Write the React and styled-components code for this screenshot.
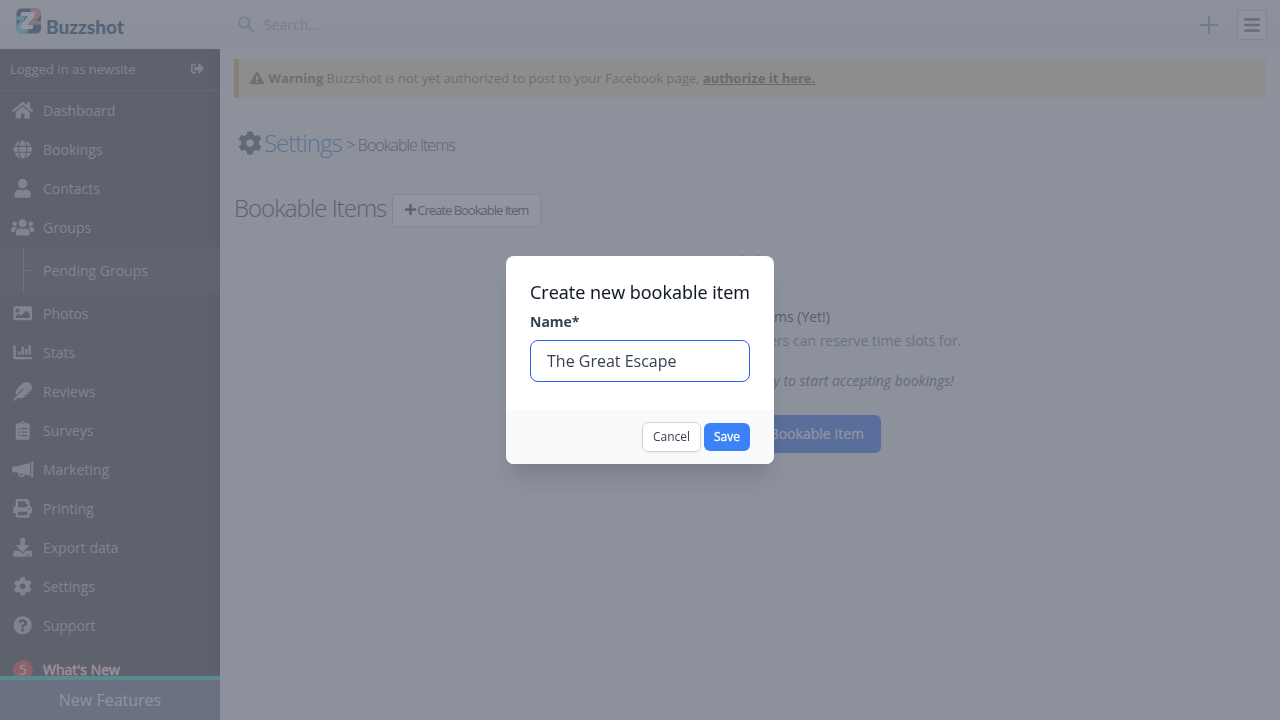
import React from 'react';
import styled, { createGlobalStyle } from 'styled-components';
import {
  FaBars,
  FaChartBar,
  FaClipboardList,
  FaCog,
  FaDownload,
  FaExclamationTriangle,
  FaFeather,
  FaGlobe,
  FaHome,
  FaImage,
  FaPlus,
  FaPrint,
  FaQuestionCircle,
  FaSignOutAlt,
  FaUser,
  FaUsers,
} from 'react-icons/fa';

const MegaphoneIcon = () => (
  <svg viewBox="0 0 576 512" fill="currentColor">
    <rect x="522" y="32" width="54" height="448" rx="18" />
    <path d="M492 76L92 186C80 166 0 160 0 204v104c0 44 80 38 92 18l400 110z" />
    <path d="M192 350v22a72 72 0 0 0 140 24" fill="none" stroke="currentColor" strokeWidth="50" />
  </svg>
);

const SearchIcon = () => (
  <svg width="18" height="18" viewBox="0 0 18 18" fill="none" stroke="currentColor">
    <circle cx="6.2" cy="6.6" r="5.2" strokeWidth="1.9" />
    <path d="M10.2 10.6l5.6 5.6" strokeWidth="2.4" />
  </svg>
);

const CalendarIcon = () => (
  <svg
    width="48"
    height="48"
    viewBox="0 0 24 24"
    fill="none"
    stroke="currentColor"
    strokeWidth="2"
    strokeLinecap="round"
    strokeLinejoin="round"
  >
    <path d="M8 7V3m8 4V3m-9 8h10M5 21h14a2 2 0 002-2V7a2 2 0 00-2-2H5a2 2 0 00-2 2v12a2 2 0 002 2z" />
  </svg>
);

const LogoMark = () => (
  <svg width="26" height="26" viewBox="0 0 26 26">
    <rect x="0.5" y="0.5" width="24.5" height="25" rx="4.5" fill="#174263" />
    <path d="M13.5 0.5h7a4.5 4.5 0 0 1 4.5 4.5v2L19.5 13H25v3.5H13L17 8z" fill="#f47c72" />
    <path d="M0.5 8.5H9L6 19h7l-2 6.5H5A4.5 4.5 0 0 1 .5 21v-3L5 12H.5z" fill="#70c9c8" />
    <path d="M5.5 4h14l-1 4.3-6.6 8.400h5.600l-1 4.300H4.200l1-4.200 6.600-8.500H4.500z" fill="#fff" />
  </svg>
);

const mainNav = [
  { label: 'Dashboard', icon: <FaHome /> },
  { label: 'Bookings', icon: <FaGlobe /> },
  { label: 'Contacts', icon: <FaUser /> },
  { label: 'Groups', icon: <FaUsers />, child: 'Pending Groups' },
  { label: 'Photos', icon: <FaImage /> },
  { label: 'Stats', icon: <FaChartBar /> },
  { label: 'Reviews', icon: <FaFeather /> },
  { label: 'Surveys', icon: <FaClipboardList /> },
  { label: 'Marketing', icon: <MegaphoneIcon /> },
  { label: 'Printing', icon: <FaPrint /> },
  { label: 'Export data', icon: <FaDownload /> },
  { label: 'Settings', icon: <FaCog /> },
  { label: 'Support', icon: <FaQuestionCircle /> },
];

const Header = () => (
  <HeaderWrapper>
    <Logo>
      <LogoMark />
      <span>Buzzshot</span>
    </Logo>
    <SearchBox>
      <SearchIcon />
      <span>Search...</span>
    </SearchBox>
    <AddButton aria-label="Add">
      <svg width="18" height="18" viewBox="0 0 18 18" stroke="currentColor" strokeWidth="2">
        <path d="M9 0v18M0 9h18" />
      </svg>
    </AddButton>
    <MenuButton aria-label="Menu">
      <FaBars />
    </MenuButton>
  </HeaderWrapper>
);

const Sidebar = () => (
  <SidebarWrapper>
    <UserRow>
      <span>Logged in as newsite</span>
      <FaSignOutAlt />
    </UserRow>
    <nav>
      {mainNav.map(({ label, icon, child }) => (
        <React.Fragment key={label}>
          <NavItem>
            <NavIcon>{icon}</NavIcon>
            {label}
          </NavItem>
          {child && <SubItem>{child}</SubItem>}
        </React.Fragment>
      ))}
      <NewsItem>
        <Badge>5</Badge>
        What&apos;s New
      </NewsItem>
    </nav>
    <NewFeatures>New Features</NewFeatures>
  </SidebarWrapper>
);

const EmptyState = () => (
  <EmptyWrapper>
    <CalendarIcon />
    <h3>No Bookable Items (Yet!)</h3>
    <p>Bookable items are options customers can reserve time slots for.</p>
    <em>Create one now and you will be ready to start accepting bookings!</em>
    <PrimaryButton>
      <FaPlus />
      Create your first Bookable Item
    </PrimaryButton>
  </EmptyWrapper>
);

const CreateItemModal = () => (
  <Overlay>
    <Dialog role="dialog">
      <DialogBody>
        <h2>Create new bookable item</h2>
        <label htmlFor="item-name">Name*</label>
        <input id="item-name" defaultValue="The Great Escape" />
      </DialogBody>
      <DialogFooter>
        <DialogButton>Cancel</DialogButton>
        <DialogButton $primary>Save</DialogButton>
      </DialogFooter>
    </Dialog>
  </Overlay>
);

const App = () => (
  <>
    <GlobalStyle />
    <Page>
      <Header />
      <Columns>
        <Sidebar />
        <Content>
          <Alert>
            <FaExclamationTriangle />
            <span>
              <strong>Warning</strong> Buzzshot is not yet authorized to post to your Facebook page,{' '}
              <a>authorize it here.</a>
            </span>
          </Alert>
          <Breadcrumb>
            <FaCog />
            <a>Settings</a>
            <span>&gt; Bookable Items</span>
          </Breadcrumb>
          <TitleRow>
            <h1>Bookable Items</h1>
            <CreateButton>
              <FaPlus />
              Create Bookable Item
            </CreateButton>
          </TitleRow>
          <EmptyState />
        </Content>
      </Columns>
    </Page>
    <CreateItemModal />
  </>
);

const GlobalStyle = createGlobalStyle`
  * {
    box-sizing: border-box;
  }

  body {
    margin: 0;
    overflow: hidden;
    font-family: 'Open Sans', 'Noto Sans', sans-serif;
    font-size: 13px;
    color: #333;
  }

  h1, h2, h3, p {
    margin: 0;
  }

  button, input {
    font-family: inherit;
  }
`;

const Page = styled.div`
  display: flex;
  flex-direction: column;
  height: 100vh;
  background: #eeeeef;
`;

const HeaderWrapper = styled.header`
  display: flex;
  align-items: center;
  flex: none;
  height: 49px;
  padding-right: 13px;
  background: linear-gradient(to bottom, #f3f3f3, #e2e2e2);
`;

const Logo = styled.div`
  display: flex;
  align-items: flex-start;
  gap: 4px;
  width: 238px;
  height: 49px;
  padding: 8px 0 0 16px;

  & span {
    margin-top: 7px;
    font-family: Lato, sans-serif;
    font-size: 19px;
    font-weight: 900;
    line-height: 24px;
    color: #123d60;
  }
`;

const SearchBox = styled.div`
  display: flex;
  align-items: center;
  gap: 8px;
  flex: 1;
  font-size: 14px;
  color: #9ca3af;
`;

const AddButton = styled.button`
  display: flex;
  margin-right: 19px;
  padding: 0;
  border: 0;
  background: none;
  color: #8b95a5;
`;

const MenuButton = styled.button`
  display: flex;
  align-items: center;
  justify-content: center;
  width: 30px;
  height: 30px;
  padding: 0;
  border: 1px solid #bfbfbf;
  border-radius: 2px;
  background: #f3f3f3;
  font-size: 18px;
  color: #6d6a69;
`;

const Columns = styled.div`
  display: flex;
  flex: 1;
  min-height: 0;
`;

const SidebarWrapper = styled.aside`
  display: flex;
  flex-direction: column;
  flex: none;
  width: 220px;
  background: linear-gradient(to left, #2c2927, #3a3633 12px);
  color: #c0bbb7;

  & nav {
    flex: 1;
    min-height: 0;
    overflow: hidden;
  }
`;

const UserRow = styled.div`
  display: flex;
  align-items: center;
  justify-content: space-between;
  flex: none;
  height: 42px;
  padding: 0 16px 2px 10px;
  border-bottom: 1px solid #525151;
  font-size: 13px;

  & svg {
    font-size: 13px;
  }
`;

const NavItem = styled.a`
  display: flex;
  align-items: center;
  height: 39px;
  padding-left: 11px;
  font-size: 14px;
`;

const NavIcon = styled.span`
  display: flex;
  justify-content: center;
  width: 23px;
  margin-right: 9px;
  font-size: 18.7px;

  & svg {
    flex: none;
    width: 1.25em;
    height: 1em;
  }
`;

const SubItem = styled.a`
  display: flex;
  align-items: center;
  height: 47px;
  padding-left: 23px;
  background: rgba(69, 69, 69, 0.6);
  font-size: 14px;

  &::before {
    content: '';
    align-self: stretch;
    width: 8px;
    margin-right: 11px;
    border-left: 1px solid #7a7a7a;
    background: linear-gradient(#7a7a7a, #7a7a7a) 0 23px / 8px 1px no-repeat;
  }
`;

const NewsItem = styled(NavItem)`
  margin-top: 5px;
  padding-left: 13px;
  color: #fff;
  text-shadow: 0 0 5px #f00;
  -webkit-text-stroke: 0.4px #fff;
`;

const Badge = styled.span`
  display: flex;
  align-items: center;
  justify-content: center;
  width: 20px;
  height: 20px;
  margin-right: 10px;
  border-radius: 50%;
  background: #ed3a2d;
  text-shadow: none;
  -webkit-text-stroke: 0;
`;

const NewFeatures = styled.div`
  flex: none;
  height: 44px;
  border-top: 4px solid #33d6bd;
  background: #6b7280;
  font-size: 16px;
  line-height: 40px;
  text-align: center;
  color: #f3f4f6;
`;

const Content = styled.main`
  flex: 1;
  padding: 10px 14px;
`;

const Alert = styled.div`
  display: flex;
  align-items: center;
  gap: 4.5px;
  height: 39px;
  padding: 0 0 2px 11px;
  border-left: 5px solid #dfa54c;
  background: #efe1b3;
  color: #826430;

  & svg {
    font-size: 14px;
  }

  & a {
    font-weight: 700;
    text-decoration: underline;
    color: #7a4a2c;
  }
`;

const Breadcrumb = styled.div`
  display: flex;
  align-items: baseline;
  margin-top: 25px;
  padding-left: 4px;
  height: 40px;
  line-height: 40px;
  letter-spacing: -1px;
  font-weight: 300;

  & svg {
    align-self: center;
    margin-right: 2px;
    font-size: 24px;
    color: #4c4f53;
  }

  & a {
    font-size: 24px;
    color: #3276b1;
  }

  & span {
    position: relative;
    top: -1px;
    margin-left: 5px;
    font-size: 16px;
  }
`;

const TitleRow = styled.div`
  display: flex;
  align-items: center;
  gap: 6px;
  height: 33px;
  margin-top: 31px;
  letter-spacing: -1px;

  & h1 {
    padding-bottom: 6px;
    font-size: 24px;
    font-weight: 300;
    line-height: 32px;
  }
`;

const CreateButton = styled.button`
  display: flex;
  align-items: center;
  justify-content: center;
  width: 149px;
  height: 33px;
  padding: 0 1px 2px 0;
  border: 1px solid #ccc;
  border-radius: 2px;
  background: #fff;
  font-size: 13px;
  letter-spacing: -1px;
  color: #333;
`;

const EmptyWrapper = styled.div`
  display: flex;
  flex-direction: column;
  align-items: center;
  margin-top: 24px;
  font-size: 14px;
  line-height: 20px;
  color: #6b7280;

  & > svg {
    color: #9ca3af;
  }

  & h3 {
    margin-top: 8px;
    font-size: 14px;
    font-weight: 500;
    color: #111827;
  }

  & p {
    margin-top: 4px;
    color: #6b7280;
  }

  & em {
    margin-top: 20px;
    padding-left: 2px;
    color: #4b5563;
  }
`;

const PrimaryButton = styled.button`
  display: flex;
  align-items: center;
  justify-content: flex-end;
  gap: 8px;
  width: 262px;
  height: 38px;
  margin-top: 24px;
  padding: 0 17px 2px;
  border: 0;
  border-radius: 6px;
  background: #2563eb;
  font-size: 14px;
  font-weight: 500;
  color: #fff;
  -webkit-text-stroke: 0.2px #fff;
`;

const Overlay = styled.div`
  position: fixed;
  inset: 0;
  display: flex;
  align-items: center;
  justify-content: center;
  background: rgba(107, 114, 128, 0.75);
`;

const Dialog = styled.div`
  width: 268px;
  border-radius: 8px;
  overflow: hidden;
  background: #fff;
  box-shadow: 0 20px 25px -5px rgba(0, 0, 0, 0.1), 0 10px 10px -5px rgba(0, 0, 0, 0.04);
`;

const DialogBody = styled.div`
  display: flex;
  flex-direction: column;
  padding: 24px 24px 28px;

  & h2 {
    font-size: 18px;
    font-weight: 500;
    line-height: 24px;
    white-space: nowrap;
    color: #111827;
    -webkit-text-stroke: 0.1px #111827;
  }

  & label {
    margin: 8px 0;
    font-size: 14px;
    font-weight: 700;
    line-height: 20px;
    color: #374151;
  }

  & input {
    width: 100%;
    height: 42px;
    padding: 0 16px;
    border: 1px solid #2563eb;
    border-radius: 8px;
    outline: none;
    font-size: 16px;
    color: #374151;
  }
`;

const DialogFooter = styled.div`
  display: flex;
  align-items: center;
  justify-content: flex-end;
  gap: 3px;
  height: 54px;
  padding: 0 24px;
  background: #f9fafb;
`;

const DialogButton = styled.button`
  width: ${({ $primary }) => ($primary ? '46px' : '59px')};
  height: ${({ $primary }) => ($primary ? '28px' : '30px')};
  padding: 0 0 2px;
  border: ${({ $primary }) => ($primary ? '0' : '1px solid #d1d5db')};
  border-radius: 6px;
  background: ${({ $primary }) => ($primary ? '#3b82f6' : '#fff')};
  box-shadow: ${({ $primary }) => ($primary ? 'none' : '0 1px 2px rgba(0, 0, 0, 0.05)')};
  font-size: 12px;
  color: ${({ $primary }) => ($primary ? '#fff' : '#374151')};
  -webkit-text-stroke: ${({ $primary }) => ($primary ? '0.3px #fff' : '0')};
`;

export default App;
